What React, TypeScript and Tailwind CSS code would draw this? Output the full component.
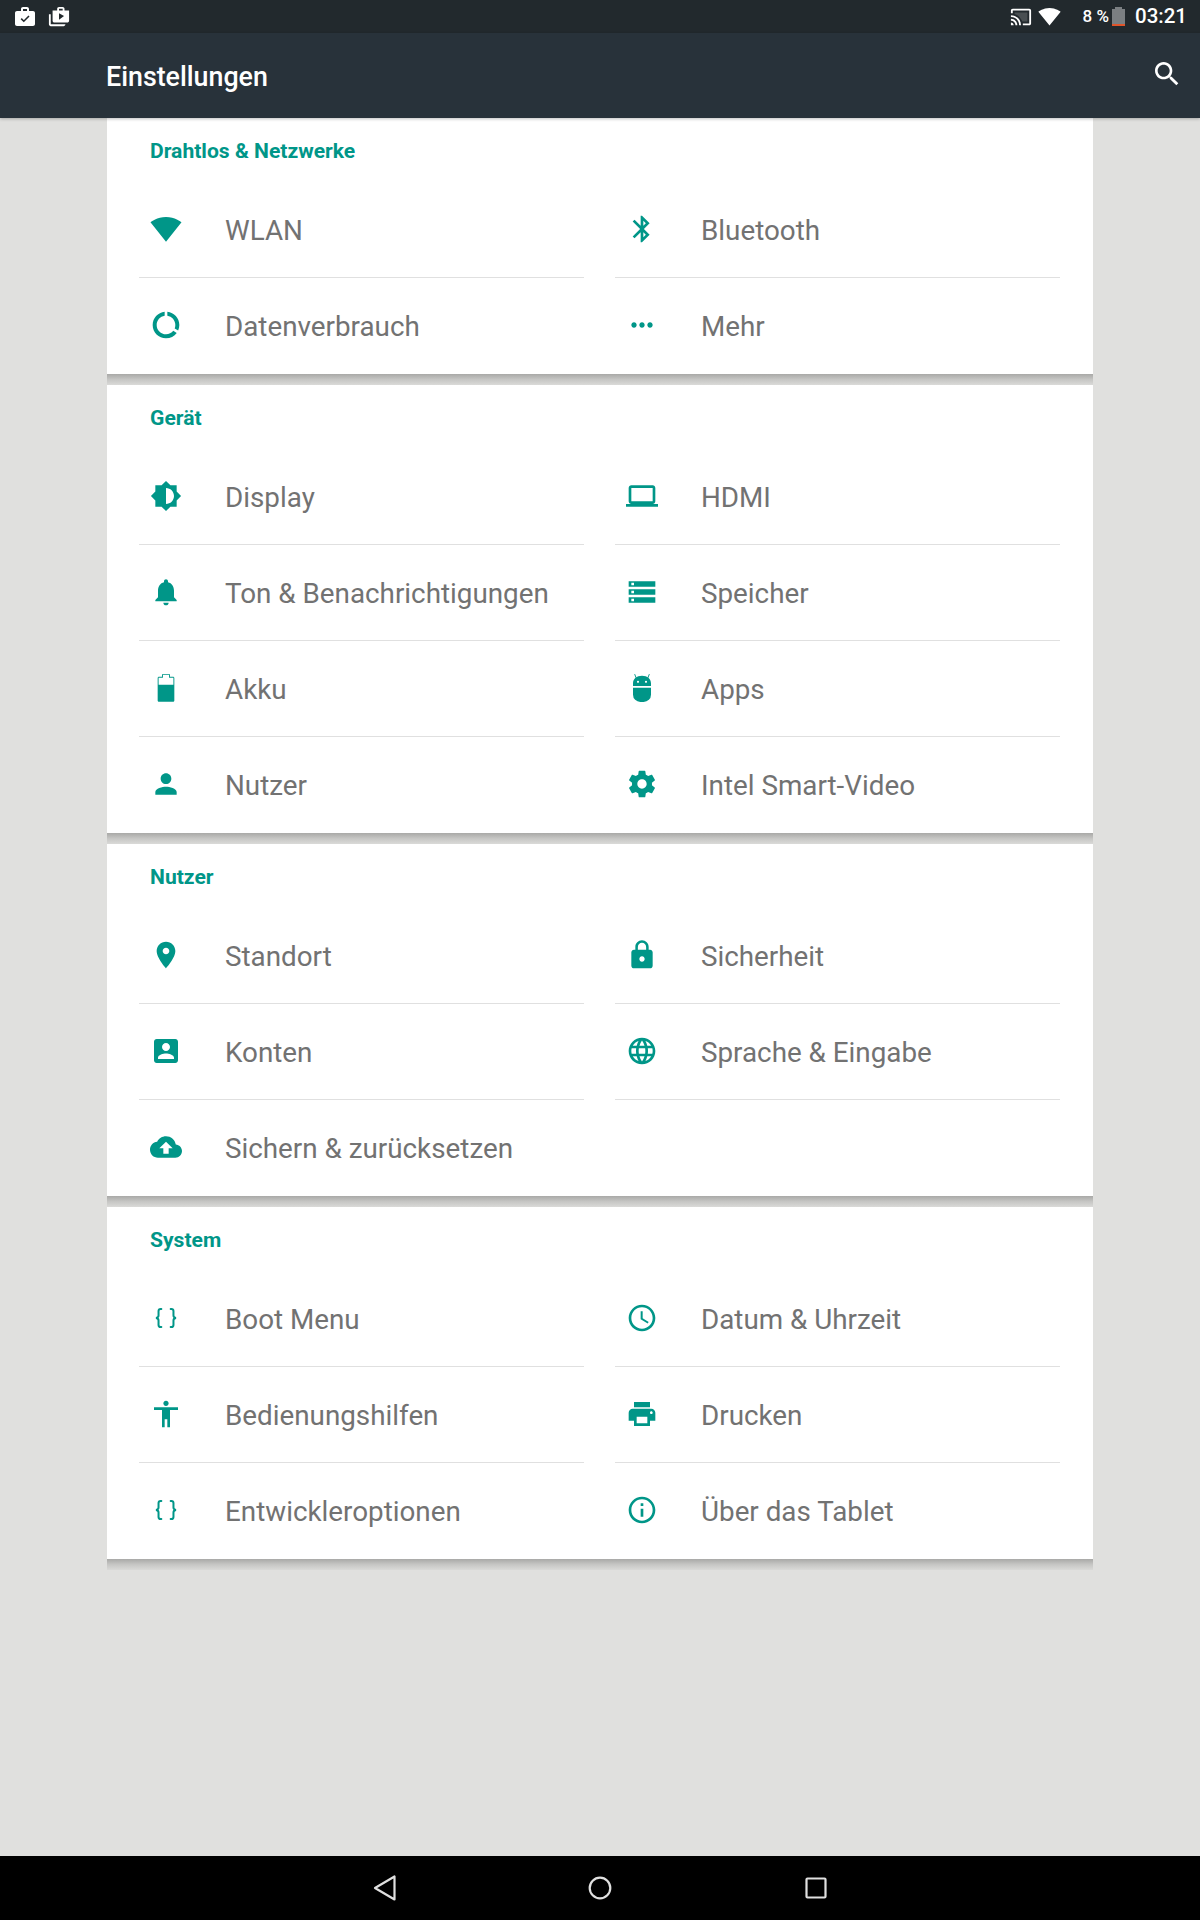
import React from "react";

const P: Record<string, string> = {
  wifi: "M12.01 21.49L23.64 7c-.45-.34-4.93-4-11.64-4C5.28 3 .81 6.66.36 7l11.64 14.49.01.01z",
  data: "M13 2.05v3.03c3.39.49 6 3.39 6 6.92 0 .9-.18 1.75-.48 2.54l2.6 1.53c.56-1.24.88-2.62.88-4.07 0-5.18-3.95-9.45-9-9.95zM12 19c-3.87 0-7-3.13-7-7 0-3.53 2.61-6.43 6-6.92V2.05c-5.06.5-9 4.76-9 9.95 0 5.52 4.47 10 9.99 10 3.31 0 6.24-1.61 8.06-4.09l-2.6-1.53C16.17 17.98 14.21 19 12 19z",
  bt: "M17.71 7.71L12 2h-1v7.59L6.41 5 5 6.41 10.59 12 5 17.59 6.41 19 11 14.41V22h1l5.71-5.71-4.3-4.29 4.3-4.29zM13 5.83l1.88 1.88L13 9.59V5.83zm1.88 10.46L13 18.17v-3.76l1.88 1.88z",
  more: "M6 10c-1.1 0-2 .9-2 2s.9 2 2 2 2-.9 2-2-.9-2-2-2zm12 0c-1.1 0-2 .9-2 2s.9 2 2 2 2-.9 2-2-.9-2-2-2zm-6 0c-1.1 0-2 .9-2 2s.9 2 2 2 2-.9 2-2-.9-2-2-2z",
  display: "M20 15.31L23.31 12 20 8.69V4h-4.69L12 .69 8.69 4H4v4.69L.69 12 4 15.31V20h4.69L12 23.31 15.31 20H20v-4.69zM12 18V6c3.31 0 6 2.69 6 6s-2.69 6-6 6z",
  bell: "M12 22c1.1 0 2-.9 2-2h-4c0 1.1.89 2 2 2zm6-6v-5c0-3.07-1.64-5.64-4.5-6.32V4c0-.83-.67-1.5-1.5-1.5s-1.5.67-1.5 1.5v.68C7.63 5.36 6 7.92 6 11v5l-2 2v1h16v-1l-2-2z",
  person: "M12 12c2.21 0 4-1.79 4-4s-1.79-4-4-4-4 1.79-4 4 1.79 4 4 4zm0 2c-2.67 0-8 1.34-8 4v2h16v-2c0-2.66-5.33-4-8-4z",
  laptop: "M20 18c1.1 0 1.99-.9 1.99-2L22 6c0-1.1-.9-2-2-2H4c-1.1 0-2 .9-2 2v10c0 1.1.9 2 2 2H0v2h24v-2h-4zM4 6h16v10H4V6z",
  storage: "M2 20h20v-4H2v4zm2-3h2v2H4v-2zM2 4v4h20V4H2zm4 3H4V5h2v2zm-4 7h20v-4H2v4zm2-3h2v2H4v-2z",
  gear: "M19.43 12.98c.04-.32.07-.64.07-.98s-.03-.66-.07-.98l2.11-1.65c.19-.15.24-.42.12-.64l-2-3.46c-.12-.22-.39-.3-.61-.22l-2.49 1c-.52-.4-1.08-.73-1.69-.98l-.38-2.65C14.46 2.18 14.25 2 14 2h-4c-.25 0-.46.18-.49.42l-.38 2.65c-.61.25-1.17.59-1.69.98l-2.49-1c-.23-.09-.49 0-.61.22l-2 3.46c-.13.22-.07.49.12.64l2.11 1.65c-.04.32-.07.65-.07.98s.03.66.07.98l-2.11 1.65c-.19.15-.24.42-.12.64l2 3.46c.12.22.39.3.61.22l2.49-1c.52.4 1.08.73 1.69.98l.38 2.65c.03.24.24.42.49.42h4c.25 0 .46-.18.49-.42l.38-2.65c.61-.25 1.17-.59 1.69-.98l2.49 1c.23.09.49 0 .61-.22l2-3.46c.12-.22.07-.49-.12-.64l-2.11-1.65zM12 15.5c-1.93 0-3.5-1.57-3.5-3.5s1.57-3.5 3.5-3.5 3.5 1.57 3.5 3.5-1.57 3.5-3.5 3.5z",
  pin: "M12 2C8.13 2 5 5.13 5 9c0 5.25 7 13 7 13s7-7.75 7-13c0-3.87-3.13-7-7-7zm0 9.5c-1.38 0-2.5-1.12-2.5-2.5s1.12-2.5 2.5-2.5 2.5 1.12 2.5 2.5-1.12 2.5-2.5 2.5z",
  lock: "M18 8h-1V6c0-2.76-2.24-5-5-5S7 3.24 7 6v2H6c-1.1 0-2 .9-2 2v10c0 1.1.9 2 2 2h12c1.1 0 2-.9 2-2V10c0-1.1-.9-2-2-2zm-6 9c-1.1 0-2-.9-2-2s.9-2 2-2 2 .9 2 2-.9 2-2 2zm3.1-9H8.9V6c0-1.71 1.39-3.1 3.1-3.1 1.71 0 3.1 1.39 3.1 3.1v2z",
  account: "M3 5v14c0 1.1.89 2 2 2h14c1.1 0 2-.9 2-2V5c0-1.1-.9-2-2-2H5c-1.11 0-2 .9-2 2zm12 4c0 1.66-1.34 3-3 3s-3-1.34-3-3 1.34-3 3-3 3 1.34 3 3zm-9 8c0-2 4-3.1 6-3.1s6 1.1 6 3.1v1H6v-1z",
  globe: "M11.99 2C6.47 2 2 6.48 2 12s4.47 10 9.99 10C17.52 22 22 17.52 22 12S17.52 2 11.99 2zm6.93 6h-2.95c-.32-1.25-.78-2.45-1.38-3.56 1.84.63 3.37 1.91 4.33 3.56zM12 4.04c.83 1.2 1.48 2.53 1.91 3.96h-3.82c.43-1.43 1.08-2.76 1.91-3.96zM4.26 14C4.1 13.36 4 12.69 4 12s.1-1.36.26-2h3.38c-.08.66-.14 1.32-.14 2 0 .68.06 1.34.14 2H4.26zm.82 2h2.95c.32 1.25.78 2.45 1.38 3.56-1.84-.63-3.37-1.9-4.33-3.56zm2.95-8H5.08c.96-1.66 2.49-2.93 4.33-3.56C8.81 5.55 8.35 6.75 8.03 8zM12 19.96c-.83-1.2-1.48-2.53-1.91-3.96h3.82c-.43 1.43-1.08 2.76-1.91 3.96zM14.34 14H9.66c-.09-.66-.16-1.32-.16-2 0-.68.07-1.35.16-2h4.68c.09.65.16 1.32.16 2 0 .68-.07 1.34-.16 2zm.25 5.56c.6-1.11 1.06-2.31 1.38-3.56h2.95c-.96 1.65-2.49 2.93-4.33 3.56zM16.36 14c.08-.66.14-1.32.14-2 0-.68-.06-1.34-.14-2h3.38c.16.64.26 1.31.26 2s-.1 1.36-.26 2h-3.38z",
  cloud: "M19.35 10.04C18.67 6.59 15.64 4 12 4 9.11 4 6.6 5.64 5.35 8.04 2.34 8.36 0 10.91 0 14c0 3.31 2.69 6 6 6h13c2.76 0 5-2.24 5-5 0-2.64-2.05-4.78-4.65-4.96zM14 13v4h-4v-4H7l5-5 5 5h-3z",
  clock: "M11.99 2C6.47 2 2 6.48 2 12s4.47 10 9.99 10C17.52 22 22 17.52 22 12S17.52 2 11.99 2zM12 20c-4.42 0-8-3.58-8-8s3.58-8 8-8 8 3.58 8 8-3.58 8-8 8zM12.5 7H11v6l5.25 3.15.75-1.23-4.5-2.67z",
  access: "M12 2c1.1 0 2 .9 2 2s-.9 2-2 2-2-.9-2-2 .9-2 2-2zm9 7h-6v13h-2v-6h-2v6H9V9H3V7h18v2z",
  print: "M19 8H5c-1.66 0-3 1.34-3 3v6h4v4h12v-4h4v-6c0-1.66-1.34-3-3-3zm-3 11H8v-5h8v5zm3-7c-.55 0-1-.45-1-1s.45-1 1-1 1 .45 1 1-.45 1-1 1zm-1-9H6v4h12V3z",
  info: "M11 17h2v-6h-2v6zm1-15C6.48 2 2 6.48 2 12s4.48 10 10 10 10-4.48 10-10S17.52 2 12 2zm0 18c-4.41 0-8-3.59-8-8s3.59-8 8-8 8 3.59 8 8-3.59 8-8 8zm-1-11h2V7h-2v2z",
};

function Braces() {
  return (
    <svg viewBox="0 0 24 24" className="w-8 h-8 fill-none stroke-[#009688]" strokeWidth={1.5} strokeLinecap="round">
      <path d="M8.5 5.2H8c-1 0-1.6.6-1.6 1.6v3.4c0 1-.5 1.6-1.9 1.8 1.4.2 1.9.8 1.9 1.8v3.4c0 1 .6 1.6 1.6 1.6h.5" />
      <path d="M15.5 5.2h.5c1 0 1.6.6 1.6 1.6v3.4c0 1 .5 1.6 1.9 1.8-1.4.2-1.9.8-1.9 1.8v3.4c0 1-.6 1.6-1.6 1.6h-.5" />
    </svg>
  );
}

function Battery() {
  return (
    <svg viewBox="0 0 24 24" className="w-8 h-8">
      <path fill="#009688" d="M9 1.6h6v2h2.25c.55 0 1 .45 1 1v16.8c0 .55-.45 1-1 1H6.75c-.55 0-1-.45-1-1V4.6c0-.55.45-1 1-1H9z" />
      <path fill="#ffffff" d="M9.7 2.3h4.6v2h3.25v5.3H6.45V4.3H9.7z" />
    </svg>
  );
}

function Android() {
  return (
    <svg viewBox="0 0 24 24" className="w-8 h-8 fill-[#009688]">
      <path d="M5.25 10.5V8.6C5.25 5.1 8 2.9 12 2.9s6.75 2.2 6.75 5.7v1.9zM9 6.6a.8.8 0 1 0 0 1.6A.8.8 0 0 0 9 6.6zm6 0a.8.8 0 1 0 0 1.6A.8.8 0 0 0 15 6.6z" fillRule="evenodd" />
      <path d="M5.25 11.75h13.5V17a5.5 5.5 0 0 1-5.5 5.5h-2.5A5.5 5.5 0 0 1 5.25 17z" />
      <path d="M7.6 4.4 6.5 1.6M16.4 4.4l1.1-2.8" stroke="#009688" strokeWidth={0.7} fill="none" />
    </svg>
  );
}

function Icon({ name }: { name: string }) {
  if (name === "braces") return <Braces />;
  if (name === "battery") return <Battery />;
  if (name === "android") return <Android />;
  return (
    <svg viewBox="0 0 24 24" className="w-8 h-8 fill-[#009688]">
      <path d={P[name]} />
    </svg>
  );
}

type Item = { icon: string; label: string } | null;

const sections: { title: string; items: Item[] }[] = [
  {
    title: "Drahtlos & Netzwerke",
    items: [
      { icon: "wifi", label: "WLAN" },
      { icon: "bt", label: "Bluetooth" },
      { icon: "data", label: "Datenverbrauch" },
      { icon: "more", label: "Mehr" },
    ],
  },
  {
    title: "Gerät",
    items: [
      { icon: "display", label: "Display" },
      { icon: "laptop", label: "HDMI" },
      { icon: "bell", label: "Ton & Benachrichtigungen" },
      { icon: "storage", label: "Speicher" },
      { icon: "battery", label: "Akku" },
      { icon: "android", label: "Apps" },
      { icon: "person", label: "Nutzer" },
      { icon: "gear", label: "Intel Smart-Video" },
    ],
  },
  {
    title: "Nutzer",
    items: [
      { icon: "pin", label: "Standort" },
      { icon: "lock", label: "Sicherheit" },
      { icon: "account", label: "Konten" },
      { icon: "globe", label: "Sprache & Eingabe" },
      { icon: "cloud", label: "Sichern & zurücksetzen" },
      null,
    ],
  },
  {
    title: "System",
    items: [
      { icon: "braces", label: "Boot Menu" },
      { icon: "clock", label: "Datum & Uhrzeit" },
      { icon: "access", label: "Bedienungshilfen" },
      { icon: "print", label: "Drucken" },
      { icon: "braces", label: "Entwickleroptionen" },
      { icon: "info", label: "Über das Tablet" },
    ],
  },
];

function Row({ item, last }: { item: Item; last: boolean }) {
  return (
    <div className={`h-[96px] flex items-center ${last ? "" : "border-b border-[#e0e0e0]"}`}>
      {item && (
        <>
          <div className="w-[86px] pl-[11px] mb-[2px] shrink-0 flex items-center">
            <Icon name={item.icon} />
          </div>
          <span className="text-[27.8px] pt-[2px] leading-none text-[#727272]">{item.label}</span>
        </>
      )}
    </div>
  );
}

function Section({ title, items }: { title: string; items: Item[] }) {
  const total = items.length;
  return (
    <div>
      <div className="bg-white">
        <div className="h-[64px] pl-[43px] pt-[2px] flex items-center text-[21.1px] font-bold text-[#009688] leading-none">
          {title}
        </div>
        <div className="grid grid-cols-[445px_445px] gap-x-[31px] pl-[32px]">
          {items.map((it, i) => (
            <Row key={i} item={it} last={i >= total - 2} />
          ))}
        </div>
      </div>
      <div className="h-[11px] bg-gradient-to-b from-[#a9a9a7] via-[#c6c6c4] to-[#dadad8]" />
    </div>
  );
}

export default function App() {
  return (
    <div className="w-[1200px] h-[1920px] flex flex-col bg-[#e0e0de] overflow-hidden" style={{ fontFamily: "Roboto, sans-serif" }}>
      <div className="h-[33px] bg-[#22292d] flex items-center justify-between text-white shrink-0">
        <div className="flex items-center pl-[13px] gap-[11px]">
          <svg viewBox="0 0 24 24" className="w-6 h-6 fill-white">
            <path d="M20 6h-4V4c0-1.11-.89-2-2-2h-4c-1.11 0-2 .89-2 2v2H4c-1.11 0-1.99.89-1.99 2L2 19c0 1.11.89 2 2 2h16c1.11 0 2-.89 2-2V8c0-1.11-.89-2-2-2zm-6 0h-4V4h4v2z" />
            <path d="M8.2 13.6 10.8 16.2 16 11" fill="none" stroke="#22292d" strokeWidth={1.6} />
          </svg>
          <svg viewBox="0 0 24 24" className="w-[22px] h-[22px] fill-white">
            <path d="M3 9H1v11c0 1.11.89 2 2 2h14c1.11 0 2-.89 2-2H3V9zm15-4V3c0-1.11-.89-2-2-2h-4c-1.11 0-2 .89-2 2v2H5v11c0 1.11.89 2 2 2h14c1.11 0 2-.89 2-2V5h-5zm-6-2h4v2h-4V3zm0 12V8l5.5 3-5.5 4z" />
          </svg>
        </div>
        <div className="flex items-center pr-[13px]">
          <svg viewBox="0 0 24 24" className="w-[22px] h-[22px] fill-white">
            <path d="M1 18v3h3c0-1.66-1.34-3-3-3zm0-4v2c2.76 0 5 2.24 5 5h2c0-3.87-3.13-7-7-7zm0-4v2c4.97 0 9 4.03 9 9h2c0-6.08-4.93-11-11-11zm20-7H3c-1.1 0-2 .9-2 2v3h2V5h18v14h-7v2h7c1.1 0 2-.9 2-2V5c0-1.1-.9-2-2-2z" />
            <path d="M5 7h14v10h-5.6C12.1 13 9 9.9 5 8.6z" fillOpacity={0.18} />
          </svg>
          <svg viewBox="0 0 24 24" className="w-[23px] h-[23px] fill-white ml-[6px]">
            <path d="M12.01 21.49L23.64 7c-.45-.34-4.93-4-11.64-4C5.28 3 .81 6.66.36 7l11.64 14.49.01.01z" />
          </svg>
          <span className="ml-[22px] text-[17px] font-medium leading-none">8 %</span>
          <div className="ml-[3px] flex flex-col items-center w-[13px] h-[19px]">
            <div className="w-[7px] h-[2px] bg-[#7b7f82]" />
            <div className="w-[13px] flex-1 bg-[#7b7f82] flex flex-col justify-end">
              <div className="h-[2px] bg-[#e0552b]" />
            </div>
          </div>
          <span className="ml-[10px] text-[20.5px] font-medium leading-none">03:21</span>
        </div>
      </div>

      <div className="h-[85px] bg-[#28323a] flex items-center justify-between shrink-0 relative z-10 shadow-[0_1px_3px_rgba(0,0,0,0.25)]">
        <span className="pl-[106px] pt-[3px] text-[26.8px] font-medium text-white leading-none">Einstellungen</span>
        <svg viewBox="0 0 24 24" className="w-8 h-8 fill-white mr-[17px] mb-[3px]">
          <path d="M15.5 14h-.79l-.28-.27C15.41 12.59 16 11.11 16 9.5 16 5.91 13.09 3 9.5 3S3 5.91 3 9.5 5.91 16 9.5 16c1.61 0 3.09-.59 4.23-1.57l.27.28v.79l5 4.99L20.49 19l-4.99-5zm-6 0C7.01 14 5 11.99 5 9.5S7.01 5 9.5 5 14 7.01 14 9.5 11.99 14 9.5 14z" />
        </svg>
      </div>

      <div className="flex-1 px-[107px]">
        {sections.map((s) => (
          <Section key={s.title} title={s.title} items={s.items} />
        ))}
      </div>

      <div className="h-[64px] bg-black flex justify-center items-center shrink-0">
        <div className="w-[216px] flex justify-center">
          <svg width="32" height="32" viewBox="0 0 32 32" fill="none" stroke="#e0e0e0" strokeWidth={2.2} strokeLinejoin="round">
            <path d="M26.5 4.5v23L7 16z" />
          </svg>
        </div>
        <div className="w-[216px] flex justify-center">
          <svg width="32" height="32" viewBox="0 0 32 32" fill="none" stroke="#e0e0e0" strokeWidth={2.2}>
            <circle cx="16" cy="16" r="10.3" />
          </svg>
        </div>
        <div className="w-[216px] flex justify-center">
          <svg width="32" height="32" viewBox="0 0 32 32" fill="none" stroke="#e0e0e0" strokeWidth={2.2} strokeLinejoin="round">
            <rect x="6.5" y="6.5" width="19" height="19" rx="1" />
          </svg>
        </div>
      </div>
    </div>
  );
}
